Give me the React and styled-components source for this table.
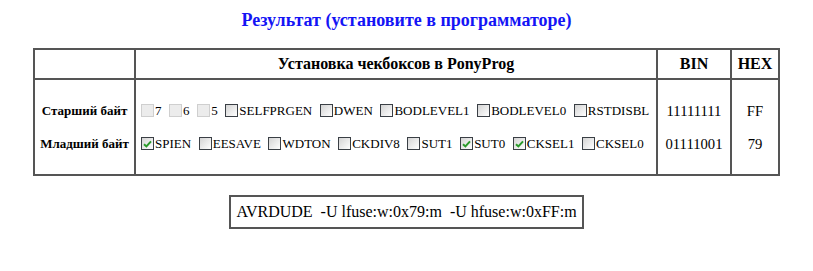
import React from 'react'
import styled, { createGlobalStyle } from 'styled-components'

const serif = `"Liberation Serif", "Times New Roman", serif`

const GlobalStyle = createGlobalStyle`
    body {
        margin: 0;
        background: #ffffff;
        font-family: ${serif};
        color: #000;
    }

    table, th, td {
        font-family: ${serif};
    }
`

const high = [
    { name: '7', disabled: true },
    { name: '6', disabled: true },
    { name: '5', disabled: true },
    { name: 'SELFPRGEN' },
    { name: 'DWEN' },
    { name: 'BODLEVEL1' },
    { name: 'BODLEVEL0' },
    { name: 'RSTDISBL' },
]

const low = [
    { name: 'SPIEN', checked: true },
    { name: 'EESAVE' },
    { name: 'WDTON' },
    { name: 'CKDIV8' },
    { name: 'SUT1' },
    { name: 'SUT0', checked: true },
    { name: 'CKSEL1', checked: true },
    { name: 'CKSEL0' },
]

const FuseBox = ({ checked, disabled }) => (
    <StyledBox $disabled={disabled}>
        {checked && (
            <svg width="9" height="8" viewBox="0 0 9 8">
                <path d="M1 4.2 L3.4 6.4 L8 1.4" fill="none" stroke="#2a9a2a" strokeWidth="2" />
            </svg>
        )}
    </StyledBox>
)

const FuseRow = ({ items }) => (
    <StyledFuseRow>
        {items.map(f => (
            <StyledFuse key={f.name}>
                <FuseBox checked={f.checked} disabled={f.disabled} />
                <span>{f.name}</span>
            </StyledFuse>
        ))}
    </StyledFuseRow>
)

const App = () => {
    return (
        <StyledPage>
            <GlobalStyle />
            <StyledTitle>Результат (установите в программаторе)</StyledTitle>
            <StyledTable>
                <colgroup>
                    <col style={{ width: 101 }} />
                    <col style={{ width: 522 }} />
                    <col style={{ width: 74 }} />
                    <col style={{ width: 48 }} />
                </colgroup>
                <thead>
                    <tr>
                        <StyledHead></StyledHead>
                        <StyledHead>Установка чекбоксов в PonyProg</StyledHead>
                        <StyledHead>BIN</StyledHead>
                        <StyledHead>HEX</StyledHead>
                    </tr>
                </thead>
                <tbody>
                    <tr>
                        <StyledCell>
                            <StyledStack>
                                <StyledLabel>Старший байт</StyledLabel>
                                <StyledLabel>Младший байт</StyledLabel>
                            </StyledStack>
                        </StyledCell>
                        <StyledCell $left>
                            <StyledStack>
                                <FuseRow items={high} />
                                <FuseRow items={low} />
                            </StyledStack>
                        </StyledCell>
                        <StyledCell>
                            <StyledStack>
                                <StyledValue>11111111</StyledValue>
                                <StyledValue>01111001</StyledValue>
                            </StyledStack>
                        </StyledCell>
                        <StyledCell>
                            <StyledStack>
                                <StyledValue>FF</StyledValue>
                                <StyledValue>79</StyledValue>
                            </StyledStack>
                        </StyledCell>
                    </tr>
                </tbody>
            </StyledTable>
            <StyledCommand>
                AVRDUDE&nbsp; -U lfuse:w:0x79:m&nbsp; -U hfuse:w:0xFF:m
            </StyledCommand>
        </StyledPage>
    )
}

const StyledPage = styled.div`
    width: 813px;
    display: flex;
    flex-direction: column;
    align-items: center;
    padding-top: 9px;
`

const StyledTitle = styled.h2`
    margin: 0 0 16px;
    font-size: 18px;
    font-weight: bold;
    color: #1414f5;
    line-height: 23px;
`

const StyledTable = styled.table`
    width: 745px;
    table-layout: fixed;
    border-collapse: collapse;
    border: 2px solid #555;
`

const StyledHead = styled.th`
    height: 28px;
    padding: 0;
    border: 2px solid #555;
    font-size: 16px;
    font-weight: bold;
    text-align: center;
`

const StyledCell = styled.td`
    height: 94px;
    padding: 0 0 0 ${p => (p.$left ? '4px' : '0')};
    border: 2px solid #555;
    text-align: ${p => (p.$left ? 'left' : 'center')};
    vertical-align: middle;
`

const StyledStack = styled.div`
    display: flex;
    flex-direction: column;
    gap: 15px;
`

const StyledLabel = styled.div`
    height: 18px;
    line-height: 18px;
    font-size: 13px;
    font-weight: bold;
`

const StyledValue = styled.div`
    height: 18px;
    line-height: 18px;
    font-size: 14.67px;
`

const StyledFuseRow = styled.div`
    display: flex;
    align-items: center;
    height: 18px;
`

const StyledFuse = styled.label`
    display: flex;
    align-items: center;
    margin-right: 6.6px;
    font-size: 13px;

    span {
        margin-left: 1px;
    }
`

const StyledBox = styled.span`
    box-sizing: border-box;
    width: 13px;
    height: 13px;
    display: flex;
    align-items: center;
    justify-content: center;
    border: 1px solid ${p => (p.$disabled ? '#cfcfcf' : '#3a3f45')};
    background: ${p => (p.$disabled
        ? '#ececec'
        : 'linear-gradient(135deg, #d4d4d4 0%, #f2f2f2 70%, #ffffff 100%)')};
`

const StyledCommand = styled.div`
    margin-top: 19px;
    padding: 6px 5px;
    border: 2px solid #555;
    font-size: 16px;
    line-height: 18px;
`

export default App
